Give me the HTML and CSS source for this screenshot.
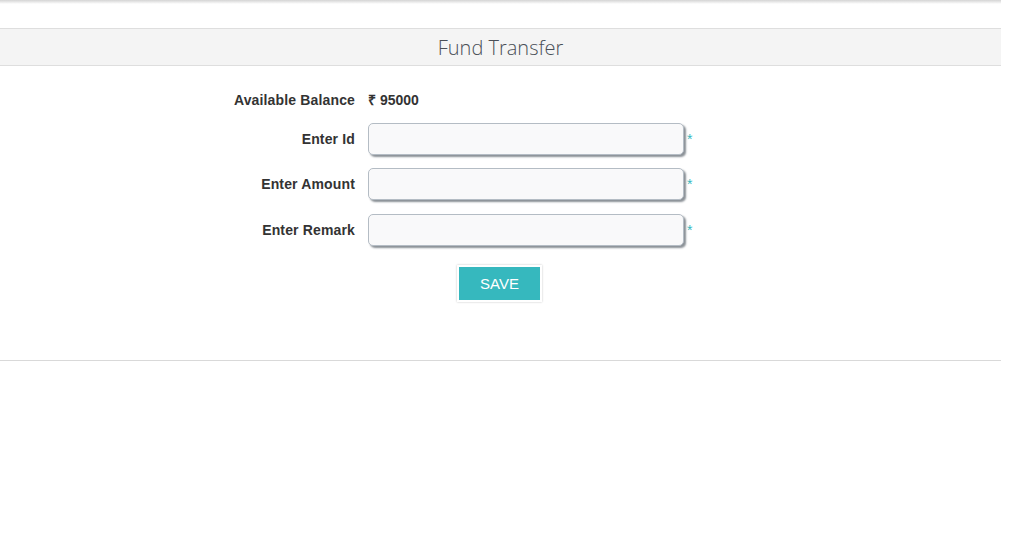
FILE: index.html
```html
<!DOCTYPE html>
<html lang="en">
<head>
    <meta charset="UTF-8">
    <title>Fund Transfer</title>
    <link rel="stylesheet" href="styles.css">
</head>
<body>
    <div class="page">
        <div class="topbar"></div>
        <div class="panel">
            <div class="panel-title">Fund Transfer</div>
            <form class="transfer-form">
                <label class="field-label">Available Balance</label>
                <div class="balance">₹ 95000</div>
                <span></span>

                <label class="field-label" for="userId">Enter Id</label>
                <input class="field-input" type="text" id="userId">
                <span class="required">*</span>

                <label class="field-label" for="amount">Enter Amount</label>
                <input class="field-input" type="text" id="amount">
                <span class="required">*</span>

                <label class="field-label" for="remark">Enter Remark</label>
                <input class="field-input" type="text" id="remark">
                <span class="required">*</span>
            </form>
            <div class="actions">
                <button type="button" class="save-btn">SAVE</button>
            </div>
        </div>
    </div>
</body>
</html>
```

FILE: styles.css
```css
body {
    margin: 0;
    background-color: #fff;
    font-family: "Liberation Sans", Arial, sans-serif;
}

.page {
    width: 1001px;
}

.topbar {
    height: 4px;
    background: linear-gradient(#d4d4d4, #fff);
    margin-bottom: 24px;
}

.panel {
    border-bottom: 1px solid #d9d9d9;
    padding-bottom: 58px;
}

.panel-title {
    background-color: #f4f4f4;
    border-top: 1px solid #dedede;
    border-bottom: 1px solid #dedede;
    height: 36px;
    line-height: 38px;
    text-align: center;
    font-family: "Open Sans", sans-serif;
    font-weight: 300;
    font-size: 20px;
    color: #4a4f57;
}

.transfer-form {
    display: grid;
    grid-template-columns: 355px 316px 20px;
    column-gap: 13px;
    row-gap: 13.5px;
    align-items: center;
    margin-top: 24px;
}

.field-label {
    text-align: right;
    font-weight: bold;
    font-size: 14px;
    color: #333;
    letter-spacing: 0.15px;
}

.balance {
    font-weight: bold;
    font-size: 14px;
    color: #333;
    height: 19px;
    line-height: 21px;
}

.field-input {
    box-sizing: border-box;
    height: 32px;
    width: 316px;
    border: 1px solid #b4bcc4;
    border-radius: 5px;
    background-color: #f9f9fa;
    box-shadow: 2px 2px 2px #8a9096;
    margin: 0;
}

.required {
    color: #36b8be;
    font-size: 14px;
    margin-left: -10px;
    margin-top: 0;
}

.actions {
    display: flex;
    justify-content: center;
    margin-top: 19px;
}

.save-btn {
    background-color: #36b8be;
    color: #fff;
    border: 2px solid #fff;
    box-shadow: 0 0 2px #c4c4c4;
    width: 85px;
    height: 37px;
    margin-left: -2px;
    font-family: "Liberation Sans", Arial, sans-serif;
    font-size: 15px;
    cursor: pointer;
}
```
